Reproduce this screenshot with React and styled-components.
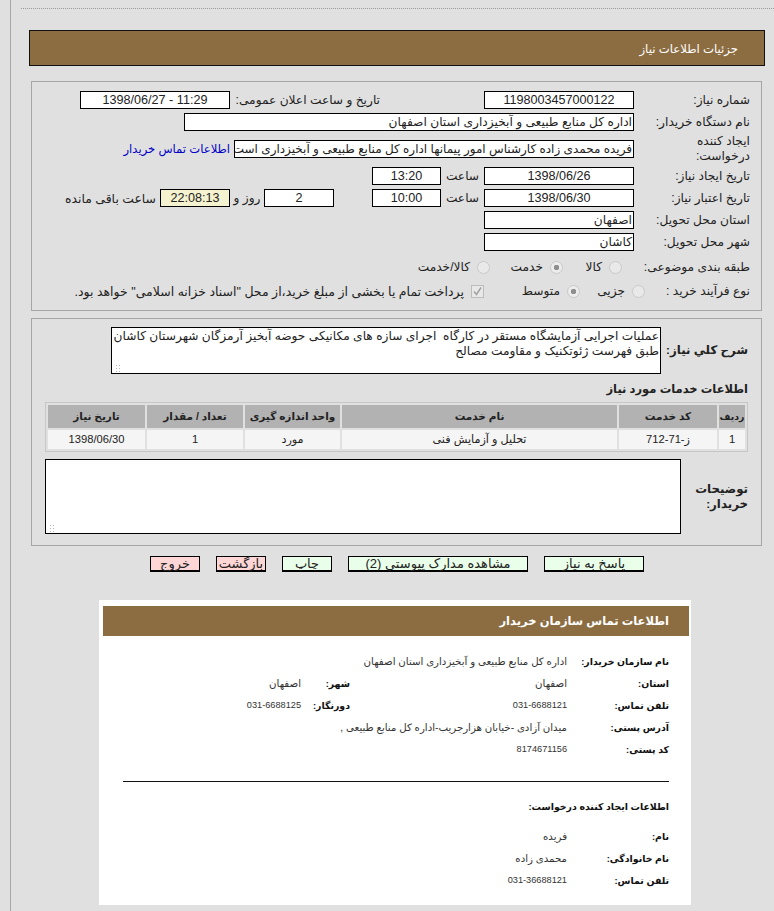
import React from "react"
import styled, { createGlobalStyle } from "styled-components"

const GlobalStyle = createGlobalStyle`
  html, body {
    margin: 0;
    height: 911px;
    overflow: hidden;
    background: #e0e0e0;
  }
  body {
    font-family: "Liberation Sans", "DejaVu Sans", sans-serif;
    color: #222;
  }
  * { box-sizing: border-box; }
`

const Page = styled.div`
  margin-left: 10px;
  height: 911px;
  border-left: 1px solid #a8a8a8;
  padding: 8px 0 0 10px;
`

const DottedLine = styled.div`
  border-top: 1px dotted #999;
  height: 1px;
`

const TitleBar = styled.div`
  direction: rtl;
  margin: 21px 9px 0 8px;
  height: 36px;
  background: #8c6d42;
  border: 1px solid #111;
  padding-right: 26px;
  line-height: 36px;
  font-size: 11.7px;
  color: #fff;
`

const Panel = styled.section`
  direction: rtl;
  margin: ${(p) => p.$top}px 12px 0 10px;
  border: 1px solid #a6a6a6;
`

const FormGrid = styled.div`
  display: flex;
  flex-direction: column;
  gap: 4px;
  padding: 9px 11px 10px 0;
`

const Row = styled.div`
  display: flex;
  align-items: center;
  height: ${(p) => p.$height || 18}px;
  margin-top: ${(p) => p.$top || 0}px;
`

const Label = styled.label`
  flex: none;
  width: ${(p) => p.$w || 116}px;
  font-size: 12.2px;
  line-height: 15px;
  margin-right: ${(p) => p.$gap || 0}px;
  white-space: nowrap;
`

const Field = styled.div`
  flex: none;
  width: ${(p) => p.$w || 150}px;
  height: 18px;
  background: ${(p) => p.$bg || "#fff"};
  border: 1px solid #000;
  line-height: 16px;
  font-size: ${(p) => p.$size || (p.$num ? 12.6 : 12.2)}px;
  text-align: ${(p) => (p.$num ? "center" : "right")};
  direction: ${(p) => (p.$ltr ? "ltr" : "rtl")};
  padding: 0 1px;
  white-space: nowrap;
  overflow: hidden;
`

const Unit = styled.span`
  flex: none;
  width: ${(p) => p.$w}px;
  text-align: center;
  font-size: 12.2px;
`

const Remaining = styled.span`
  margin-right: 4px;
  font-size: 12.4px;
  white-space: nowrap;
`

const ContactLink = styled.a`
  margin-right: 4px;
  font-size: 11.6px;
  color: #0000c8;
  white-space: nowrap;
`

const Option = styled.span`
  flex: none;
  display: flex;
  align-items: center;
  gap: 7px;
  width: ${(p) => p.$w}px;
  margin-right: ${(p) => p.$offset || 0}px;
  font-size: ${(p) => p.$size || 12.2}px;
  white-space: nowrap;
`

const Radio = styled.input.attrs({ type: "radio", disabled: true, readOnly: true })`
  appearance: none;
  flex: none;
  margin: 0;
  width: 13px;
  height: 13px;
  border-radius: 50%;
  border: 1px solid #c9c9c9;
  background: ${(p) => (p.checked ? "radial-gradient(circle, #8f8f8f 0 2.5px, #ececec 3px)" : "#e9e9e9")};
`

const CheckBox = styled.span`
  flex: none;
  width: 13px;
  height: 13px;
  border: 1px solid #bcbcbc;
  background: #e8e8e8;
  display: flex;
`

const DescRow = styled.div`
  display: flex;
  align-items: center;
  padding: 8px 13px 0;
`

const BoldLabel = styled.div`
  flex: none;
  width: ${(p) => p.$w}px;
  font-size: 11.8px;
  font-weight: 700;
  line-height: 15px;
`

const TextBox = styled.textarea`
  flex: none;
  display: block;
  direction: rtl;
  width: ${(p) => p.$w}px;
  height: ${(p) => p.$h}px;
  margin: 0;
  padding: 1px;
  border: 1px solid #000;
  border-radius: 0;
  outline: none;
  background: #fff;
  color: #222;
  font-family: "Liberation Sans", "DejaVu Sans", sans-serif;
  font-size: 12.2px;
  line-height: 15px;
  white-space: pre;
  overflow: hidden;

  &::-webkit-resizer {
    background-image:
      linear-gradient(to right, #fff 3px, transparent 3px, transparent 8px, #fff 8px),
      linear-gradient(to bottom, #fff 5px, transparent 5px),
      radial-gradient(circle, #b8b8b8 0.7px, transparent 1px);
    background-size: 100% 100%, 100% 100%, 3px 3px;
  }
`

const SectionTitle = styled.h3`
  margin: 8px 13px 5px;
  font-size: 11.5px;
  font-weight: 700;
  line-height: 15px;
`

const TableWrap = styled.div`
  padding: 0 13px;
`

const ServiceTable = styled.table`
  width: 703px;
  table-layout: fixed;
  border: 1px solid #c6c6c6;
  border-spacing: 2px;
`

const HeadCell = styled.th`
  width: ${(p) => p.$w}px;
  height: 23px;
  padding: 0;
  background: #b2b2b2;
  font-size: ${(p) => p.$size || 10.5}px;
  font-weight: 700;
  line-height: 1;
  color: #222;
  white-space: nowrap;
`

const Cell = styled.td`
  height: 19px;
  padding: 0;
  background: #f5f5f5;
  text-align: center;
  font-size: 11.2px;
  line-height: 1;
  direction: ${(p) => (p.$ltr ? "ltr" : "rtl")};
`

const NotesRow = styled.div`
  display: flex;
  align-items: center;
  padding: 7px 13px 11px;
`

const ButtonBar = styled.div`
  direction: rtl;
  display: flex;
  gap: 16px;
  margin-top: 10px;
  padding-right: 130px;
`

const ActionButton = styled.button`
  width: ${(p) => p.$w}px;
  height: 16px;
  padding: 0;
  border: 1px solid #000;
  border-bottom-width: 2px;
  border-radius: 0;
  background: ${(p) => (p.$danger ? "#ffd6d6" : "#eaffea")};
  color: #222;
  font-family: inherit;
  font-size: 13px;
  line-height: 14px;
  white-space: nowrap;
  overflow: visible;
`

const ContactCard = styled.section`
  direction: rtl;
  width: 592px;
  height: 305px;
  margin: 28px 0 0 78px;
  padding: 6px 2px 0 4px;
  background: #fff;
`

const CardHeader = styled.div`
  height: 30px;
  background: #8c6d42;
  padding-right: 20px;
  line-height: 30px;
  font-size: 11.5px;
  font-weight: 700;
  color: #fff;
`

const CardBody = styled.div`
  padding: 14px 20px 0 20px;
`

const InfoRow = styled.div`
  display: flex;
  align-items: center;
  height: 22px;
`

const InfoLabel = styled.div`
  flex: none;
  width: ${(p) => p.$w || 102}px;
  font-size: 9.4px;
  font-weight: 700;
  color: #111;
`

const InfoValue = styled.div`
  flex: none;
  width: ${(p) => p.$w || "auto"};
  font-size: ${(p) => (p.$num ? "9.2px" : "10.2px")};
  color: #333;
  white-space: nowrap;
`

const Divider = styled.hr`
  margin: 21px 0 14px;
  border: 0;
  border-top: 1px solid #111;
`

const CardSubtitle = styled.div`
  height: 22px;
  margin-bottom: 7px;
  line-height: 22px;
  font-size: 9.4px;
  font-weight: 700;
  color: #111;
`

const BUYER_TEXT = "فریده محمدی زاده کارشناس امور پیمانها اداره کل منابع طبیعی و آبخیزداری است"
const DESCRIPTION =
  "عملیات اجرایی آزمایشگاه مستقر در کارگاه  اجرای سازه های مکانیکی حوضه آبخیز آرمزگان شهرستان کاشان\nطبق فهرست ژئوتکنیک و مقاومت مصالح"

export default function App() {
  return (
    <Page>
      <GlobalStyle />
      <DottedLine />
      <TitleBar>جزئیات اطلاعات نیاز</TitleBar>

      <Panel $top={15}>
        <FormGrid>
          <Row>
            <Label>شماره نیاز:</Label>
            <Field $num>1198003457000122</Field>
            <Label $w={150} $gap={104}>تاریخ و ساعت اعلان عمومی:</Label>
            <Field $num $ltr>1398/06/27 - 11:29</Field>
          </Row>
          <Row>
            <Label>نام دستگاه خریدار:</Label>
            <Field $w={450}>اداره کل منابع طبیعی و آبخیزداری استان اصفهان</Field>
          </Row>
          <Row $height={28}>
            <Label>ایجاد کننده<br />درخواست:</Label>
            <Field $w={400} $size={12}>{BUYER_TEXT}</Field>
            <ContactLink>اطلاعات تماس خریدار</ContactLink>
          </Row>
          <Row>
            <Label>تاریخ ایجاد نیاز:</Label>
            <Field $num>1398/06/26</Field>
            <Unit $w={43}>ساعت</Unit>
            <Field $num $w={69}>13:20</Field>
          </Row>
          <Row>
            <Label>تاریخ اعتبار نیاز:</Label>
            <Field $num>1398/06/30</Field>
            <Unit $w={43}>ساعت</Unit>
            <Field $num $w={69}>10:00</Field>
            <Unit $w={38} />
            <Field $num $w={70}>2</Field>
            <Unit $w={34}>روز و</Unit>
            <Field $num $w={70} $bg="#f5f2cf">22:08:13</Field>
            <Remaining>ساعت باقی مانده</Remaining>
          </Row>
          <Row>
            <Label>استان محل تحویل:</Label>
            <Field>اصفهان</Field>
          </Row>
          <Row>
            <Label>شهر محل تحویل:</Label>
            <Field>کاشان</Field>
          </Row>
          <Row $top={3}>
            <Label>طبقه بندی موضوعی:</Label>
            <Option $w={59} $offset={12}><Radio />کالا</Option>
            <Option $w={73}><Radio checked />خدمت</Option>
            <Option $w={80}><Radio />کالا/خدمت</Option>
          </Row>
          <Row $top={2}>
            <Label $w={105}>نوع فرآیند خرید :</Label>
            <Option $w={65}><Radio />جزیی</Option>
            <Option $w={96}><Radio checked />متوسط</Option>
            <Option $w={410} $size={12.5}>
              <CheckBox>
                <svg width="11" height="11" viewBox="0 0 11 11">
                  <path d="M2 5.5 L4.5 8.5 L9 1.5" fill="none" stroke="#a0a0a0" strokeWidth="1.5" />
                </svg>
              </CheckBox>
              پرداخت تمام یا بخشی از مبلغ خرید،از محل "اسناد خزانه اسلامی" خواهد بود.
            </Option>
          </Row>
        </FormGrid>
      </Panel>

      <Panel $top={7}>
        <DescRow>
          <BoldLabel $w={87}>شرح کلي نیاز:</BoldLabel>
          <TextBox $w={550} $h={47} readOnly defaultValue={DESCRIPTION} />
        </DescRow>
        <SectionTitle>اطلاعات خدمات مورد نیاز</SectionTitle>
        <TableWrap>
          <ServiceTable>
            <thead>
              <tr>
                <HeadCell $w={26} $size={9.4}>ردیف</HeadCell>
                <HeadCell $w={98}>کد خدمت</HeadCell>
                <HeadCell $w={275}>نام خدمت</HeadCell>
                <HeadCell $w={95}>واحد اندازه گیری</HeadCell>
                <HeadCell $w={96}>تعداد / مقدار</HeadCell>
                <HeadCell $w={97}>تاریخ نیاز</HeadCell>
              </tr>
            </thead>
            <tbody>
              <tr>
                <Cell>1</Cell>
                <Cell $ltr>712-71-ز</Cell>
                <Cell>تحلیل و آزمایش فنی</Cell>
                <Cell>مورد</Cell>
                <Cell>1</Cell>
                <Cell>1398/06/30</Cell>
              </tr>
            </tbody>
          </ServiceTable>
        </TableWrap>
        <NotesRow>
          <BoldLabel $w={67}>توضیحات خریدار:</BoldLabel>
          <TextBox $w={636} $h={75} readOnly />
        </NotesRow>
      </Panel>

      <ButtonBar>
        <ActionButton $w={100}>پاسخ به نیاز</ActionButton>
        <ActionButton $w={180}>مشاهده مدارک پیوستي (2)</ActionButton>
        <ActionButton $w={50}>چاپ</ActionButton>
        <ActionButton $w={50} $danger>بازگشت</ActionButton>
        <ActionButton $w={50} $danger>خروج</ActionButton>
      </ButtonBar>

      <ContactCard>
        <CardHeader>اطلاعات تماس سازمان خریدار</CardHeader>
        <CardBody>
          <InfoRow>
            <InfoLabel>نام سازمان خریدار:</InfoLabel>
            <InfoValue>اداره کل منابع طبیعی و آبخیزداری استان اصفهان</InfoValue>
          </InfoRow>
          <InfoRow>
            <InfoLabel>استان:</InfoLabel>
            <InfoValue $w="217px">اصفهان</InfoValue>
            <InfoLabel $w={49}>شهر:</InfoLabel>
            <InfoValue>اصفهان</InfoValue>
          </InfoRow>
          <InfoRow>
            <InfoLabel>تلفن تماس:</InfoLabel>
            <InfoValue $w="217px" $num>031-6688121</InfoValue>
            <InfoLabel $w={49}>دورنگار:</InfoLabel>
            <InfoValue $num>031-6688125</InfoValue>
          </InfoRow>
          <InfoRow>
            <InfoLabel>آدرس پستی:</InfoLabel>
            <InfoValue>میدان آزادی -خیابان هزارجریب-اداره کل منابع طبیعی ,</InfoValue>
          </InfoRow>
          <InfoRow>
            <InfoLabel>کد پستی:</InfoLabel>
            <InfoValue $num>8174671156</InfoValue>
          </InfoRow>
          <Divider />
          <CardSubtitle>اطلاعات ایجاد کننده درخواست:</CardSubtitle>
          <InfoRow>
            <InfoLabel>نام:</InfoLabel>
            <InfoValue>فریده</InfoValue>
          </InfoRow>
          <InfoRow>
            <InfoLabel>نام خانوادگی:</InfoLabel>
            <InfoValue>محمدی زاده</InfoValue>
          </InfoRow>
          <InfoRow>
            <InfoLabel>تلفن تماس:</InfoLabel>
            <InfoValue $num>031-36688121</InfoValue>
          </InfoRow>
        </CardBody>
      </ContactCard>
    </Page>
  )
}
